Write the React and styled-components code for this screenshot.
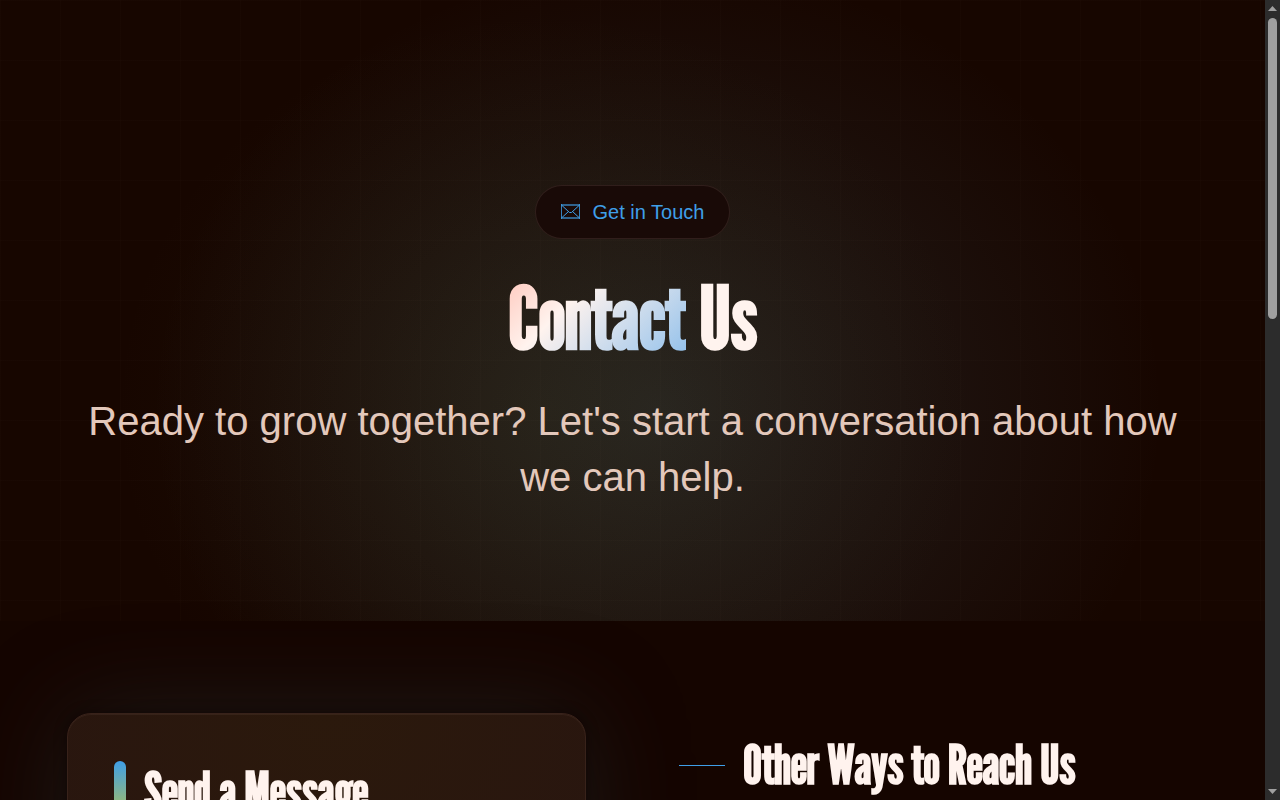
import React from "react";
import styled, { createGlobalStyle } from "styled-components";

const GlobalStyle = createGlobalStyle`
  html {
    color-scheme: dark;
    scrollbar-width: none;
    background: #150500;
  }
  body {
    margin: 0;
    color: #fff3ee;
    font-family: "Liberation Sans", Arial, sans-serif;
  }
  *, *::before, *::after { box-sizing: border-box; }
`;

const displayFont = `"League Gothic", "Liberation Sans Narrow", "Arial Narrow", "Liberation Sans", sans-serif`;

const Shell = styled.div`
  display: grid;
  grid-template-columns: minmax(0, 1fr) 15px;
`;

const Page = styled.div`
  min-width: 0;
`;

const Gutter = styled.div`
  background: #2c2c2c;
`;

const ScrollBar = styled.div`
  position: sticky;
  top: 0;
  display: flex;
  flex-direction: column;
  align-items: center;
  justify-content: space-between;
  height: 100vh;
  padding: 6px 0;
`;

const Arrow = styled.i`
  flex: none;
  width: 9px;
  height: 5px;
  background: #9f9f9f;
  clip-path: ${(p) =>
    p.$down ? "polygon(0 0, 100% 0, 50% 100%)" : "polygon(50% 0, 100% 100%, 0 100%)"};
`;

const Track = styled.div`
  flex: 1;
  width: 9px;
  padding: 7px 0;
`;

const Thumb = styled.div`
  height: 39.4%;
  border-radius: 5px;
  background: #9f9f9f;
`;

const Hero = styled.header`
  display: flex;
  flex-direction: column;
  align-items: center;
  padding: 185px 67px 116px;
  text-align: center;
  background:
    repeating-linear-gradient(90deg, rgba(255, 220, 190, 0.01) 0 1px, transparent 1px 60px),
    repeating-linear-gradient(180deg, rgba(255, 220, 190, 0.01) 0 1px, transparent 1px 60px),
    radial-gradient(ellipse 34% 64% at 43% 66%, rgba(100, 125, 65, 0.1), transparent),
    radial-gradient(ellipse 40% 72% at 52% 66%, rgba(95, 140, 155, 0.19), transparent),
    #170600;
`;

const Badge = styled.p`
  display: flex;
  align-items: center;
  gap: 13px;
  height: 54px;
  margin: 0;
  padding: 0 25px;
  border: 1px solid rgba(255, 220, 210, 0.1);
  border-radius: 27px;
  background: #190a07;
  color: #3f9fe8;
  font-size: 20px;
`;

const PageTitle = styled.h1`
  margin: 32px 0 30px;
  font: 700 87px/92px ${displayFont};
`;

const Accent = styled.span`
  background: linear-gradient(135deg, #ffc4b8 0%, #fff3ee 35%, #8abdeb 100%);
  background-clip: text;
  color: transparent;
`;

const Lead = styled.p`
  max-width: 1100px;
  margin: 0;
  color: #e3c8bb;
  font-size: 40px;
  line-height: 56px;
`;

const Content = styled.main`
  display: grid;
  grid-template-columns: minmax(0, 1fr) minmax(0, 1fr);
  gap: 93px;
  padding: 92px 67px;
`;

const FormCard = styled.section`
  min-height: 1220px;
  padding: 47px 46px;
  border: 1px solid #38221a;
  border-radius: 24px;
  background: radial-gradient(ellipse 300px 300px at 50% 0, #2b190c, #29160f);
  box-shadow:
    inset 0 1px 0 rgba(255, 220, 210, 0.06),
    0 0 12px rgba(10, 4, 2, 0.6),
    0 0 100px rgba(45, 60, 62, 0.38);
`;

const SectionTitle = styled.h2`
  display: flex;
  align-items: center;
  gap: 18px;
  margin: 0;
  font: 700 53px/62px ${displayFont};
  white-space: nowrap;
`;

const CardTitle = styled(SectionTitle)`
  &::before {
    content: "";
    width: 12px;
    height: 62px;
    border-radius: 6px;
    background: linear-gradient(180deg, #3f9fe8, #b8c24a);
  }
`;

const Channels = styled.section`
  padding-top: 21px;
`;

const ChannelsTitle = styled(SectionTitle)`
  &::before {
    content: "";
    width: 46px;
    height: 1px;
    background: #3f9fe8;
  }
`;

function Envelope() {
  return (
    <svg width="19" height="16" viewBox="0 0 19 16" fill="none" stroke="currentColor" aria-hidden="true">
      <path d="M0 1h19M0 14h19" strokeWidth="2" opacity=".6" />
      <path d="M.5 0v15M18.5 0v15" opacity=".8" />
      <path d="M1 1.5l7.5 7h2l7.5-7M1 13.5l6.5-6M18 13.5l-6.5-6" />
    </svg>
  );
}

export default function App() {
  return (
    <>
      <GlobalStyle />
      <Shell>
        <Page>
          <Hero>
            <Badge>
              <Envelope />
              Get in Touch
            </Badge>
            <PageTitle>
              <Accent>Contact</Accent> Us
            </PageTitle>
            <Lead>
              Ready to grow together? Let's start a conversation about how we can help.
            </Lead>
          </Hero>
          <Content>
            <FormCard>
              <CardTitle>Send a Message</CardTitle>
            </FormCard>
            <Channels>
              <ChannelsTitle>Other Ways to Reach Us</ChannelsTitle>
            </Channels>
          </Content>
        </Page>
        <Gutter aria-hidden="true">
          <ScrollBar>
            <Arrow />
            <Track>
              <Thumb />
            </Track>
            <Arrow $down />
          </ScrollBar>
        </Gutter>
      </Shell>
    </>
  );
}
